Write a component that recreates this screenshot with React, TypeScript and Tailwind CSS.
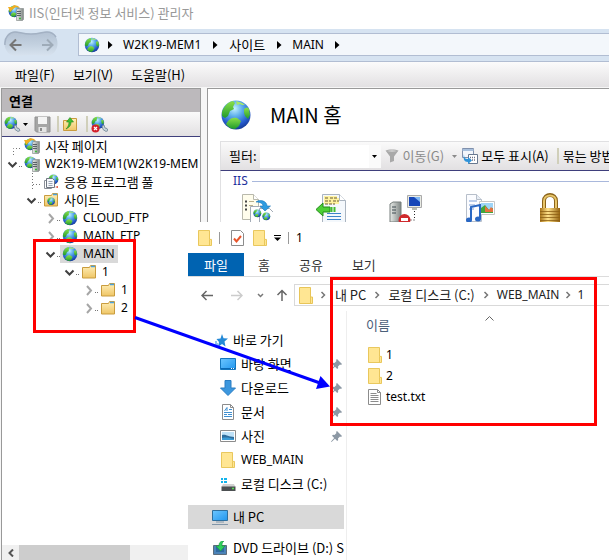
import React, { useState } from "react";

const en = "font-['Noto_Sans','Noto_Sans_CJK_KR',sans-serif] text-[12px]";
const ko = "font-['Noto_Sans_CJK_KR',sans-serif] text-[13px]";

// gradients used by all of the icons
function Defs() {
  return (
    <svg className="absolute" width="0" height="0" aria-hidden="true">
      <defs>
        <radialGradient id="sea" cx="45%" cy="28%" r="75%">
          <stop offset="0" stopColor="#c4f2ff" />
          <stop offset="0.35" stopColor="#5fb0ec" />
          <stop offset="0.75" stopColor="#2459cc" />
          <stop offset="1" stopColor="#14368c" />
        </radialGradient>
        <linearGradient id="land" x1="0" y1="0" x2="0" y2="1">
          <stop offset="0" stopColor="#8be04a" />
          <stop offset="1" stopColor="#1f9a2c" />
        </linearGradient>
        <linearGradient id="fold" x1="0" y1="0" x2="0" y2="1">
          <stop offset="0" stopColor="#fff0b8" />
          <stop offset="1" stopColor="#efc566" />
        </linearGradient>
        <linearGradient id="metal" x1="0" y1="0" x2="1" y2="0">
          <stop offset="0" stopColor="#e8ebe8" />
          <stop offset="1" stopColor="#7f8684" />
        </linearGradient>
        <linearGradient id="brass" x1="0" y1="0" x2="1" y2="0">
          <stop offset="0" stopColor="#a8741a" />
          <stop offset="0.4" stopColor="#ffe28a" />
          <stop offset="1" stopColor="#94620f" />
        </linearGradient>
        <linearGradient id="screen" x1="0" y1="0" x2="1" y2="1">
          <stop offset="0" stopColor="#6cc6ff" />
          <stop offset="1" stopColor="#2196ee" />
        </linearGradient>
        <linearGradient id="pill" x1="0" y1="0" x2="0" y2="1">
          <stop offset="0" stopColor="#b3c1d2" />
          <stop offset="0.5" stopColor="#c2d0df" />
          <stop offset="1" stopColor="#d8e3ef" />
        </linearGradient>
      </defs>
    </svg>
  );
}

function Earth() {
  return (
    <g>
      <circle cx="16" cy="16" r="14.5" fill="url(#sea)" />
      <path d="M2 13C4 7 8 3 13 2l2 2-2 4 1 2-4 2-2 5-3 2-3-2z" fill="url(#land)" />
      <path d="M8 22c2-3 6-4 9-3l4 3-2 5-4 3c-4 0-7-2-9-5z" fill="url(#land)" />
      <path d="M24 10c2-2 4-2 5 0l1 6-2 4-3-3-1-3z" fill="url(#land)" />
      <path d="M16 2l6 2 3 2-3 0-2-1-3 1z" fill="#a7e86a" />
    </g>
  );
}

function Globe({ size = 16 }: { size?: number }) {
  return (
    <svg className="shrink-0" width={size} height={size} viewBox="0 0 32 32">
      <Earth />
    </svg>
  );
}

function Server({ spark = false }: { spark?: boolean }) {
  return (
    <svg className="shrink-0" width="16" height="16" viewBox="0 0 16 16">
      <g transform="scale(.4)">
        <Earth />
      </g>
      {spark && <path d="M0 2l4 0 2-2 4 1 2 2-4-1-3 2-3 3-1-3z" fill="#f2ae22" />}
      <path d="M8.500 5l1-1.500h6v11l-1 1h-6z" fill="url(#metal)" stroke="#8a918f" strokeWidth=".7" />
      <path d="M9 6.500h4M9 8.500h4M9 10.500h4" stroke="#5a6266" />
      <path d="M11 13.500h2" stroke="#3cbb3c" strokeWidth="1.500" />
    </svg>
  );
}

// folder with the tab on top, used in the connection tree
function TreeFolder({ site = false }: { site?: boolean }) {
  return (
    <svg className="shrink-0" width="16" height="16" viewBox="0 0 16 16">
      <path d="M1.500 3.500h7l1-2h5v12.500h-13z" fill="url(#fold)" stroke="#c99c3e" />
      <path d="M10 2.500h4" stroke="#4ba0dc" strokeWidth="1.500" />
      {site && (
        <g transform="translate(4 5) scale(.26)">
          <Earth />
        </g>
      )}
    </svg>
  );
}

function AppPool() {
  return (
    <svg className="shrink-0" width="16" height="16" viewBox="0 0 16 16">
      <g transform="translate(5 0) scale(.34)">
        <Earth />
      </g>
      <path d="M1.500 6.500h7v8h-7z" fill="#fff" stroke="#8a8f98" />
      <path d="M3.500 4.500h6l2 2v7h-8z" fill="#f6f8fb" stroke="#6f7680" />
      <path d="M5.500 7.500h4M5.500 9.500h4M5.500 11.500h4" stroke="#9aa4b4" />
      <path d="M12 13l3-1v2z" fill="#e04a30" />
    </svg>
  );
}

function Folder({ small = false }: { small?: boolean }) {
  return (
    <svg className="shrink-0" width="14" height={small ? 16 : 17} viewBox="0 0 14 17" preserveAspectRatio="none">
      <path d="M.5.5h11v9.500h2v6.500H.5z" fill="#ffe693" stroke="#e8c558" />
      <path d="M11.500 10v6" stroke="#e8c558" />
    </svg>
  );
}

function Chevron({ className = "" }: { className?: string }) {
  return (
    <svg className={`shrink-0 ${className}`} width="6" height="8" viewBox="0 0 6 8" fill="none" stroke="#777" strokeWidth="1.500">
      <path d="M1.500 1l3 3-3 3" />
    </svg>
  );
}

function Triangle() {
  return (
    <svg className="shrink-0" width="5" height="8" viewBox="0 0 5 8">
      <path d="M0 0l4.500 4L0 8z" />
    </svg>
  );
}

function Caret({ fill = "#000" }: { fill?: string }) {
  return (
    <svg className="shrink-0" width="5" height="3" viewBox="0 0 5 3">
      <path d="M0 0h5L2.500 3z" fill={fill} />
    </svg>
  );
}

function Pin() {
  return (
    <svg className="shrink-0" width="11" height="11" viewBox="0 0 11 11">
      <path d="M6 0l5 5-1 1-1-.5L7 7.500l.2 1.500-1 1L4 7.800.5 11 0 10.500 3.200 7 1 4.800l1-1L3.500 4 5.500 2 5 1z" fill="#8c98a4" />
    </svg>
  );
}

function TitleBar() {
  return (
    <header className="flex h-[29px] shrink-0 items-center gap-[5px] bg-white pb-1 pl-2">
      <Server spark />
      <h1 className={`${ko} text-[#999]`}>IIS(인터넷 정보 서비스) 관리자</h1>
    </header>
  );
}

function AddressBar() {
  return (
    <nav className="flex h-[33px] shrink-0 border-b border-[#b1bdd2] bg-[#d6e3f1] pt-1">
      <svg className="-mt-0.5 mr-5 ml-1 shrink-0" width="54" height="26" viewBox="0 0 54 26">
        <path d="M11 .8C16 .8 18 3 27 3S38 .8 43 .8C50 .8 53.500 6 53.500 12.500S49 25 42 25C37 25 35 24 27 24s-10 1-15 1C5 25 .5 19 .5 12.500S5 .8 11 .8z" fill="url(#pill)" />
        <path d="M1 14C0 6 6 1 11 1c5 0 7 2 16 2S38 1 43 1c4 0 7 2 9 5" fill="none" stroke="#a3b1c3" strokeWidth="1.500" />
        <path d="M17.500 14H7M12 8.500L6.500 14l5.500 5.500" fill="none" stroke="#777" strokeWidth="2" />
        <path d="M38 14h10.500M43 8.500l5.500 5.500-5.500 5.500" fill="none" stroke="#9eabb8" strokeWidth="2" />
      </svg>
      <div className="flex h-[23px] min-w-0 flex-1 items-center border border-r-0 border-[#b1bdd2] bg-[#f3f7fb] pl-[5px]">
        <Globe />
        <span className="mr-2.5 ml-2 flex"><Triangle /></span>
        <button type="button" className={`${en} mr-3`}>W2K19-MEM1</button>
        <Triangle />
        <button type="button" className={`${ko} mr-3 ml-[11px]`}>사이트</button>
        <Triangle />
        <button type="button" className={`${en} mr-[11px] ml-2.5`}>MAIN</button>
        <Triangle />
      </div>
    </nav>
  );
}

function MenuBar() {
  return (
    <div className={`${ko} flex h-[26px] shrink-0 items-center gap-[18px] border-b border-[#f6f6f6] bg-linear-to-b from-[#fbfbfb] to-[#e2e0e2] pl-[15px]`}>
      <button type="button">파일(F)</button>
      <button type="button">보기(V)</button>
      <button type="button">도움말(H)</button>
    </div>
  );
}

type Slot = "open" | "closed" | "elbow" | "start";

type Node = { level: number; slot: Slot; icon: React.ReactNode; label: string; korean?: boolean };

const nodes: Node[] = [
  { level: 0, slot: "start", icon: <Server spark />, label: "시작 페이지", korean: true },
  { level: 0, slot: "open", icon: <Server />, label: "W2K19-MEM1(W2K19-MEM" },
  { level: 1, slot: "elbow", icon: <AppPool />, label: "응용 프로그램 풀", korean: true },
  { level: 1, slot: "open", icon: <TreeFolder site />, label: "사이트", korean: true },
  { level: 2, slot: "closed", icon: <Globe />, label: "CLOUD_FTP" },
  { level: 2, slot: "closed", icon: <Globe />, label: "MAIN_FTP" },
  { level: 2, slot: "open", icon: <Globe />, label: "MAIN" },
  { level: 3, slot: "open", icon: <TreeFolder />, label: "1" },
  { level: 4, slot: "closed", icon: <TreeFolder />, label: "1" },
  { level: 4, slot: "closed", icon: <TreeFolder />, label: "2" },
];

const indent = ["pl-0", "pl-[19px]", "pl-[38px]", "pl-[57px]", "pl-[76px]"];

function TreeSlot({ slot }: { slot: Slot }) {
  return (
    <svg className="shrink-0" width="20" height="18" viewBox="0 0 20 18" fill="none">
      {slot === "start" && <path d="M21 11.500h-9.500V18" stroke="#777" strokeDasharray="1 2" />}
      {slot === "elbow" && <path d="M11.500 0v18M12 11.500h8" stroke="#777" strokeDasharray="1 2" />}
      {slot === "open" && <path d="M6.500 7.500l4 4 4-4" stroke="#404040" strokeWidth="2" />}
      {slot === "closed" && <path d="M9 5l4 4.500L9 14" stroke="#a6a6a6" strokeWidth="2" />}
      {(slot === "open" || slot === "closed") && <path d="M17 11.500h3" stroke="#777" strokeDasharray="1 1" />}
    </svg>
  );
}

function Connections() {
  const [selected, setSelected] = useState(6);
  return (
    <section className="ml-px flex w-[200px] shrink-0 flex-col border border-b-0 border-[#999] bg-white">
      <h2 className={`${ko} flex h-[23px] shrink-0 items-center bg-[#bcb9bc] pl-[7px] font-bold`}>연결</h2>
      <div className="flex h-[25px] shrink-0 items-center border-b border-[#3f3f7c] bg-linear-to-b from-[#fafafa] to-[#e2e0e2] pl-0.5">
        <button type="button" aria-label="연결 만들기" className="flex items-center gap-0.5">
          <svg width="17" height="17" viewBox="0 0 17 17">
            <g transform="scale(.43)"><Earth /></g>
            <path d="M10 10l2-1 1 3 2 .5 1 2-2 1-3-2z" fill="#c7d4dc" stroke="#6d8190" strokeWidth=".8" />
          </svg>
          <Caret />
        </button>
        <button type="button" aria-label="저장" className="ml-[6px]">
          <svg width="17" height="17" viewBox="0 0 17 17">
            <path d="M1 1h15v15H2.500L1 14.500z" fill="#a5a5a5" stroke="#919191" />
            <path d="M4 1h9v7H4z" fill="#f4f4f4" />
            <path d="M4.500 11h8v5h-8z" fill="#e4e4e4" />
            <path d="M6 12h2v3H6z" fill="#8a8a8a" />
          </svg>
        </button>
        <span className="mr-[3px] ml-[6px] h-4 w-0.5 bg-[#d0cfba]" />
        <button type="button" aria-label="위로">
          <svg width="16" height="16" viewBox="0 0 16 16">
            <path d="M1.500 4.500h6l1-2h6v12h-13z" fill="url(#fold)" stroke="#c99c3e" />
            <path d="M4 13c4-2 5-4 5-7h2.500L8 1.500 4.500 6H7c0 3-1 5-3 7z" fill="#3fc030" stroke="#28861f" strokeWidth=".6" />
          </svg>
        </button>
        <span className="mr-[3px] ml-2 h-4 w-0.5 bg-[#d0cfba]" />
        <button type="button" aria-label="연결 제거">
          <svg width="17" height="17" viewBox="0 0 17 17">
            <g transform="scale(.43)"><Earth /></g>
            <path d="M11 10l2-1 1 3 2 .5 1 2-2 1-3-2z" fill="#c7d4dc" stroke="#6d8190" strokeWidth=".8" />
            <circle cx="4.500" cy="12.500" r="4" fill="#d3202a" />
            <path d="M3 11l3 3M6 11l-3 3" stroke="#fff" strokeWidth="1.200" />
          </svg>
        </button>
      </div>
      <ul className="min-h-0 flex-1 overflow-hidden">
        {nodes.map((node, i) => (
          <li key={i} className={`flex h-[18px] items-center ${indent[node.level]}`}>
            <TreeSlot slot={node.slot} />
            <button
              type="button"
              onClick={() => setSelected(i)}
              className={`flex h-[18px] items-center gap-[5px] pr-[3px] pl-0.5 whitespace-nowrap ${i === selected ? "bg-[#d9d9d9]" : ""}`}
            >
              {node.icon}
              <span className={`${node.korean ? ko : en} leading-[18px]`}>{node.label}</span>
            </button>
          </li>
        ))}
      </ul>
      <div className="flex h-[15px] shrink-0 bg-[#f0f0f0]">
        <button type="button" aria-label="왼쪽으로 스크롤" className="flex w-[17px] items-center justify-center">
          <svg width="6" height="8" viewBox="0 0 6 8" fill="none" stroke="#555" strokeWidth="2">
            <path d="M5 .5L1.500 4 5 7.500" />
          </svg>
        </button>
        <div className="w-[111px] bg-[#cdcdcd]" />
      </div>
    </section>
  );
}

function FeatureIcons() {
  return (
    <div className="flex gap-[42px] pt-0.5 pl-5">
      <svg className="shrink-0" width="32" height="32" viewBox="0 0 32 32">
        <path d="M1.500 1.500h11l5 5v20h-16z" fill="#fffdec" stroke="#b9b9ac" />
        <path d="M12.500 1.500v5h5" fill="#fff" stroke="#b9b9ac" />
        <path d="M4 8.500h2M4 12.500h2M4 16.500h2" stroke="#444" strokeWidth="2" />
        <path d="M8 8.500h5M8 12.500h4" stroke="#b9b08c" />
        <path d="M9.500 13.500h9l3 3v15h-12z" fill="#fff" stroke="#a3abb6" />
        <path d="M18.500 15.500h10l4 4v13h-14z" fill="#fff" stroke="#a3abb6" />
        <g transform="translate(12 16) scale(.27)"><Earth /></g>
        <g transform="translate(21 19) scale(.27)"><Earth /></g>
        <path d="M15 9c4-3 11-1 11 4h3.500L24 18l-5-5h3c0-3-4-4-7-4z" fill="#2e9be0" stroke="#1973b8" strokeWidth=".6" />
      </svg>
      <svg className="shrink-0" width="32" height="32" viewBox="0 0 32 32">
        <path d="M7.500 1.500h17l6 6v24h-23z" fill="#f4f8fc" stroke="#aab4c0" />
        <path d="M24.500 1.500v6h6" fill="#fff" stroke="#aab4c0" />
        <path d="M9 3h13v2h2v6H9z" fill="#fff3a0" />
        <path d="M10 5h3M15 5h7M10 8h6M18 8h6M10 11h10" stroke="#695a33" strokeWidth="1.200" strokeDasharray="3 1" />
        <path d="M1 16.500L8 10v4h7v5H8v4z" fill="#4ccf36" stroke="#258c1c" />
        <path d="M16.500 14v5M19.500 14v5" stroke="#43bd30" strokeWidth="2" />
        <path d="M12 20.500h14M12 23.500h14M12 26.500h14" stroke="#3f83c9" />
      </svg>
      <svg className="shrink-0" width="34" height="32" viewBox="0 0 34 32">
        <path d="M1 11l3-2h8v20H1z" fill="url(#metal)" stroke="#777f7d" />
        <path d="M3 14h4M3 17h4M3 20h4" stroke="#3f4a50" />
        <path d="M18.500 2.500h14v12h-14z" fill="#e9ebe4" stroke="#aaa" />
        <path d="M20 4h11v9H20z" fill="#1746b8" />
        <path d="M25 4h6v5z" fill="#7fb7f4" />
        <path d="M23 15h5v2h-5z" fill="#b9bcb3" />
        <path d="M25.500 18v9H20" fill="none" stroke="#222" strokeDasharray="1 2" />
        <circle cx="15.500" cy="27" r="6" fill="#cf2a2d" />
        <path d="M12 25h7v3h-7z" fill="#fff" />
      </svg>
      <svg className="shrink-0" width="32" height="32" viewBox="0 0 32 32">
        <path d="M1.500 1.500h10l5 5v22h-15z" fill="#fbfcff" stroke="#b7bfca" />
        <path d="M11.500 1.500v5h5" fill="#e7edf5" stroke="#b7bfca" />
        <path d="M4 8h8M4 12h6M4 16h5" stroke="#7c9ed5" />
        <path d="M14.500 8.500h15v13h-15z" fill="#fff" stroke="#c6c6c6" />
        <path d="M16 10h12v10H16z" fill="#9ed4f7" />
        <path d="M16 20v-5l4-3 4 5 4-2v5z" fill="#42a53b" />
        <path d="M20 13l4 4 2-3 2 2v3h-8z" fill="#e6713c" />
        <path d="M6 27V14l9-2v14" fill="none" stroke="#2867c4" strokeWidth="2" />
        <ellipse cx="4" cy="27" rx="3" ry="2.500" fill="#2867c4" />
        <ellipse cx="13" cy="26" rx="3" ry="2.500" fill="#2867c4" />
      </svg>
      <svg className="shrink-0" width="28" height="32" viewBox="0 0 28 32">
        <path d="M5 15V8c0-8 12-8 12 0v7" fill="none" stroke="#8b631a" strokeWidth="4" />
        <path d="M5 15V8c0-7.500 12-7.500 12 0v7" fill="none" stroke="#e7c56a" strokeWidth="2" />
        <path d="M1 15h20v17H1z" fill="url(#brass)" />
        <path d="M1 18.500h20M1 21.500h20M1 24.500h20M1 27.500h20" stroke="#8d6014" strokeWidth=".8" />
      </svg>
    </div>
  );
}

function FeatureView() {
  return (
    <main className="ml-[6px] flex min-w-0 flex-1 flex-col overflow-hidden border-t border-l border-[#999] bg-white pl-3">
      <div className="flex h-[52px] shrink-0 items-center gap-[18px]">
        <Globe size={32} />
        <h2 className="font-['Noto_Sans_CJK_KR',sans-serif] text-[20px]">MAIN 홈</h2>
      </div>
      <div className={`${ko} flex h-[30px] shrink-0 items-center border-t border-l border-[#e0e0e2] border-b border-b-[#3f3f7c] bg-linear-to-b from-[#fafafa] to-[#e2e0e2] pl-2 whitespace-nowrap`}>
        <label htmlFor="filter">필터:</label>
        <div className="ml-[3px] flex h-[23px] w-[121px] shrink-0 items-center bg-white">
          <input id="filter" className="h-full min-w-0 flex-1 bg-white px-1 outline-none" />
          <button type="button" aria-label="필터 목록" className="flex h-full w-3 items-center justify-center bg-[#fafafa]">
            <Caret />
          </button>
        </div>
        <button type="button" className="ml-1 flex items-center gap-1 text-[#8a8a8a]">
          <svg width="14" height="14" viewBox="0 0 14 14">
            <path d="M.5 1.500C3 0 11 0 13.500 1.500L9 7.500V12l-4 1.500v-6z" fill="#a9a9a9" />
            <path d="M2 2c3-1 7-1 10 0-3 1-7 1-10 0z" fill="#d6d6d6" />
          </svg>
          이동(G)
        </button>
        <span className="mr-[5px] ml-2 flex"><Caret fill="#8a8a8a" /></span>
        <button type="button" className="flex items-center gap-[3px]">
          <svg width="16" height="16" viewBox="0 0 16 16">
            <path d="M.5.500h11v9H.500z" fill="#f3f6fb" stroke="#8090ac" />
            <path d="M.5 2h11" stroke="#a8c0dd" strokeWidth="2" />
            <path d="M6.500 6.500h9v9h-9z" fill="#fff" stroke="#68788f" />
            <path d="M8 9.500h6M8 12h6" stroke="#6b6f86" strokeDasharray="1 1" strokeWidth="1.500" />
            <path d="M2 6c0 4 1 5 4 5V9l4 3.500L6 16v-2c-4 0-5-3-4-8z" fill="#2f93d9" />
          </svg>
          모두 표시(A)
        </button>
        <span className="mr-1 ml-2 h-4 w-0.5 shrink-0 bg-[#d0cfba]" />
        <button type="button">묶는 방법</button>
      </div>
      <div className="flex-1 border-l border-[#e0e0e2]">
        <div className="flex h-[20px] items-center gap-1 pl-3">
          <span className={`${en} text-[#1f2f9c]`}>IIS</span>
          <span className="h-px flex-1 bg-[#a9b8dc]" />
        </div>
        <FeatureIcons />
      </div>
    </main>
  );
}

const places = [
  {
    label: "바탕 화면",
    icon: (
      <svg width="16" height="16" viewBox="0 0 16 16">
        <path d="M.5 2.500h15v11H.5z" fill="url(#screen)" stroke="#1477bf" />
        <path d="M1 12.500h14" stroke="#0b69b4" />
        <path d="M11 12.500h1M13 12.500h1" stroke="#fff" />
      </svg>
    ),
    pinned: true,
  },
  {
    label: "다운로드",
    icon: (
      <svg width="16" height="16" viewBox="0 0 16 16">
        <path d="M5 .5h6V8h4.500L8 15.500.5 8H5z" fill="#3c97de" stroke="#2a7dc2" />
      </svg>
    ),
    pinned: true,
  },
  {
    label: "문서",
    icon: (
      <svg width="16" height="16" viewBox="0 0 16 16">
        <path d="M2.500.5h8l3 3v12h-11z" fill="#fff" stroke="#8c8c8c" />
        <path d="M10.500.5v3h3" fill="none" stroke="#8c8c8c" />
        <path d="M4.500 7L7 3.500V7M9 5.500h3M4 8.500h8M4 10.500h3M8 10.500h4M4 12.500h8" fill="none" stroke="#3f8fd0" />
      </svg>
    ),
    pinned: true,
  },
  {
    label: "사진",
    icon: (
      <svg width="16" height="16" viewBox="0 0 16 16">
        <path d="M.5 2.500h15v11H.5z" fill="#fff" stroke="#8c8c8c" />
        <path d="M2 4h12v8H2z" fill="#bfe2f8" />
        <path d="M2 7c4-1 6 2 12 2v3H2z" fill="#2f6d9c" />
        <path d="M2 10c5-1 8 0 12 1v1H2z" fill="#3a9bd6" />
      </svg>
    ),
    pinned: true,
  },
  { label: "WEB_MAIN", icon: <Folder small />, pinned: false },
  {
    label: "로컬 디스크 (C:)",
    icon: (
      <svg width="16" height="16" viewBox="0 0 16 16">
        <path d="M1 2h2v2H1zM4 2h3v2H4zM1 5h2v2H1zM4 5h3v2H4z" fill="#12b4ec" />
        <path d="M3 8h11l1.500 3H1.500z" fill="#d2d2d2" />
        <path d="M1.500 10.500h14V15h-14z" fill="#4c5052" />
        <path d="M12 12.500h2" stroke="#52e052" strokeWidth="1.500" />
      </svg>
    ),
    pinned: false,
  },
];

function Sidebar() {
  return (
    <aside className={`${ko} w-[156px] shrink-0 overflow-hidden whitespace-nowrap`}>
      <button type="button" className="mt-[17px] flex h-6 items-center gap-[5px] pl-[27px]">
        <svg width="13" height="13" viewBox="0 0 13 13">
          <path d="M7 0l1.500 4.200L13 4.500 9.500 7.500l1 5L7 10l-4 3 1-5L1.500 5l4-.500z" fill="#2589d6" />
          <path d="M0 8h2M0 10h3" stroke="#2589d6" />
        </svg>
        바로 가기
      </button>
      <ul>
        {places.map((p) => (
          <li key={p.label} className="flex h-6 items-center pr-[2px] pl-8">
            <button type="button" className="flex flex-1 items-center gap-[5px]">
              <span className="flex w-4 justify-center">{p.icon}</span>
              <span className={p.label === "WEB_MAIN" ? en : ko}>{p.label}</span>
            </button>
            {p.pinned && <Pin />}
          </li>
        ))}
      </ul>
      <button type="button" className="mt-[9px] flex h-6 w-full items-center gap-[5px] bg-[#d9d9d9] pl-6">
        <svg width="16" height="16" viewBox="0 0 16 16">
          <path d="M.5 1.500h15v10H.5z" fill="url(#screen)" stroke="#2e6f9e" />
          <path d="M4 13h8M0 15.500h16" stroke="#8296a8" />
        </svg>
        내 PC
      </button>
      <button type="button" className="mt-[7px] flex h-6 items-center gap-[6px] pl-[25px]">
        <svg className="shrink-0" width="14" height="14" viewBox="0 0 14 14">
          <path d="M.5 4.500h13v9H.500z" fill="#4b83b8" stroke="#5c6c7a" />
          <path d="M3 6h8v5H3z" fill="#2f69a0" />
          <path d="M11 0C7 0 6 2 6 5H3l4.500 5L12 5H9c0-2 0-4 2-5z" fill="#2fd05c" stroke="#159a3c" strokeWidth=".6" />
        </svg>
        DVD 드라이브 (D:) S
      </button>
    </aside>
  );
}

function TextFile() {
  return (
    <svg className="shrink-0" width="14" height="16" viewBox="0 0 14 16">
      <path d="M.5.5h9l3 3v12H.5z" fill="#fff" stroke="#8c8c8c" />
      <path d="M9.500.5v3h3" fill="none" stroke="#8c8c8c" />
      <path d="M2.500 4.500h6M2.500 6.500h8M2.500 8.500h8M2.500 10.500h8M2.500 12.500h8" stroke="#8c8c8c" />
    </svg>
  );
}

const files = [
  { name: "1", icon: <Folder small /> },
  { name: "2", icon: <Folder small /> },
  { name: "test.txt", icon: <TextFile /> },
];

function Explorer() {
  return (
    <section className="absolute top-[222px] right-0 bottom-0 left-[188px] flex flex-col overflow-hidden bg-white">
      <div className="flex h-[31px] shrink-0 items-center pl-[10px]">
        <Folder small />
        <span className="mx-[7px] h-3 w-px bg-[#999]" />
        <svg className="ml-1" width="13" height="16" viewBox="0 0 13 16">
          <path d="M.5.5h9l3 3v12H.5z" fill="#fff" stroke="#8c8c8c" />
          <path d="M3 8.500l2.500 3L10 6" fill="none" stroke="#e8552b" strokeWidth="2" />
        </svg>
        <span className="ml-[9px] flex"><Folder small /></span>
        <svg className="ml-[7px]" width="7" height="6" viewBox="0 0 7 6">
          <path d="M0 .500h7" stroke="#000" />
          <path d="M0 2.500h7L3.500 6z" />
        </svg>
        <span className="mx-[7px] h-3 w-px bg-[#999]" />
        <span className={en}>1</span>
      </div>
      <div className={`${ko} flex h-6 shrink-0 border-b border-[#dcdcdc] text-[#333]`}>
        <button type="button" className="h-[23px] w-14 bg-[#0063b1] text-white">파일</button>
        <button type="button" className="ml-3.5">홈</button>
        <button type="button" className="ml-[29px]">공유</button>
        <button type="button" className="ml-[29px]">보기</button>
      </div>
      <nav className="flex h-[30px] shrink-0 items-center pt-[6px] pl-[13px]">
        <button type="button" aria-label="뒤로">
          <svg width="12" height="11" viewBox="0 0 12 11" fill="none" stroke="#666" strokeWidth="1.500">
            <path d="M12 5.500H1M5.500 1L1 5.500 5.500 10" />
          </svg>
        </button>
        <button type="button" aria-label="앞으로" className="ml-[18px]">
          <svg width="12" height="11" viewBox="0 0 12 11" fill="none" stroke="#ccc" strokeWidth="1.500">
            <path d="M0 5.500h11M6.500 1L11 5.500 6.500 10" />
          </svg>
        </button>
        <button type="button" aria-label="최근 위치" className="ml-[14px]">
          <svg width="7" height="5" viewBox="0 0 7 5" fill="none" stroke="#777" strokeWidth="1.500">
            <path d="M1 1l2.500 2.500L6 1" />
          </svg>
        </button>
        <button type="button" aria-label="위로" className="ml-3">
          <svg width="12" height="12" viewBox="0 0 12 12" fill="none" stroke="#666" strokeWidth="1.500">
            <path d="M6 12V1.500M1.500 6L6 1.500 10.500 6" />
          </svg>
        </button>
        <div className={`${ko} ml-[6px] flex h-[22px] min-w-0 flex-1 items-center border border-r-0 border-[#d9d9d9] pl-1 whitespace-nowrap text-[#222]`}>
          <Folder />
          <Chevron className="ml-[7px]" />
          <button type="button" className="ml-[9px]">내 PC</button>
          <Chevron className="mx-2" />
          <button type="button">로컬 디스크 (C:)</button>
          <Chevron className="mx-2" />
          <button type="button" className={en}>WEB_MAIN</button>
          <Chevron className="mx-[6px]" />
          <button type="button" className={en}>1</button>
        </div>
      </nav>
      <div className="flex min-h-0 flex-1 pt-1">
        <Sidebar />
        <div className="ml-[2px] flex-1 border-l border-[#eee] pl-[19px]">
          <table className="w-full text-left">
            <thead>
              <tr>
                <th className={`${ko} flex h-[33px] items-center pb-[6px] font-normal text-[#4c607a]`}>
                  <span>이름</span>
                  <svg className="mb-3 ml-[95px]" width="9" height="5" viewBox="0 0 9 5" fill="none" stroke="#666">
                    <path d="M.5 4.500l4-4 4 4" />
                  </svg>
                </th>
              </tr>
            </thead>
            <tbody>
              {files.map((f) => (
                <tr key={f.name}>
                  <td className={`${en} flex h-[21px] items-center gap-1 pl-0.5`}>
                    {f.icon}
                    <span>{f.name}</span>
                  </td>
                </tr>
              ))}
            </tbody>
          </table>
        </div>
      </div>
    </section>
  );
}

// marks that tie the site folder to the folder on disk
function Marks() {
  return (
    <>
      <div className="pointer-events-none absolute top-[239px] left-[33px] h-[94px] w-[103px] border-3 border-[#f00]" />
      <div className="pointer-events-none absolute top-[277px] left-[330px] h-[149px] w-[267px] border-3 border-[#f00]" />
      <svg className="pointer-events-none absolute top-[312px] left-[132px]" width="200" height="80" viewBox="0 0 200 80">
        <path d="M3 5.500l185 65.500" stroke="#00f" strokeWidth="3" />
        <path d="M198 74.500l-14 2.500 4.500-13z" fill="#00f" />
      </svg>
    </>
  );
}

export default function App() {
  return (
    <div className="relative flex h-screen flex-col overflow-hidden bg-[#f6f6f6] text-black">
      <Defs />
      <TitleBar />
      <AddressBar />
      <MenuBar />
      <div className="flex min-h-0 flex-1">
        <Connections />
        <FeatureView />
      </div>
      <Explorer />
      <Marks />
    </div>
  );
}
